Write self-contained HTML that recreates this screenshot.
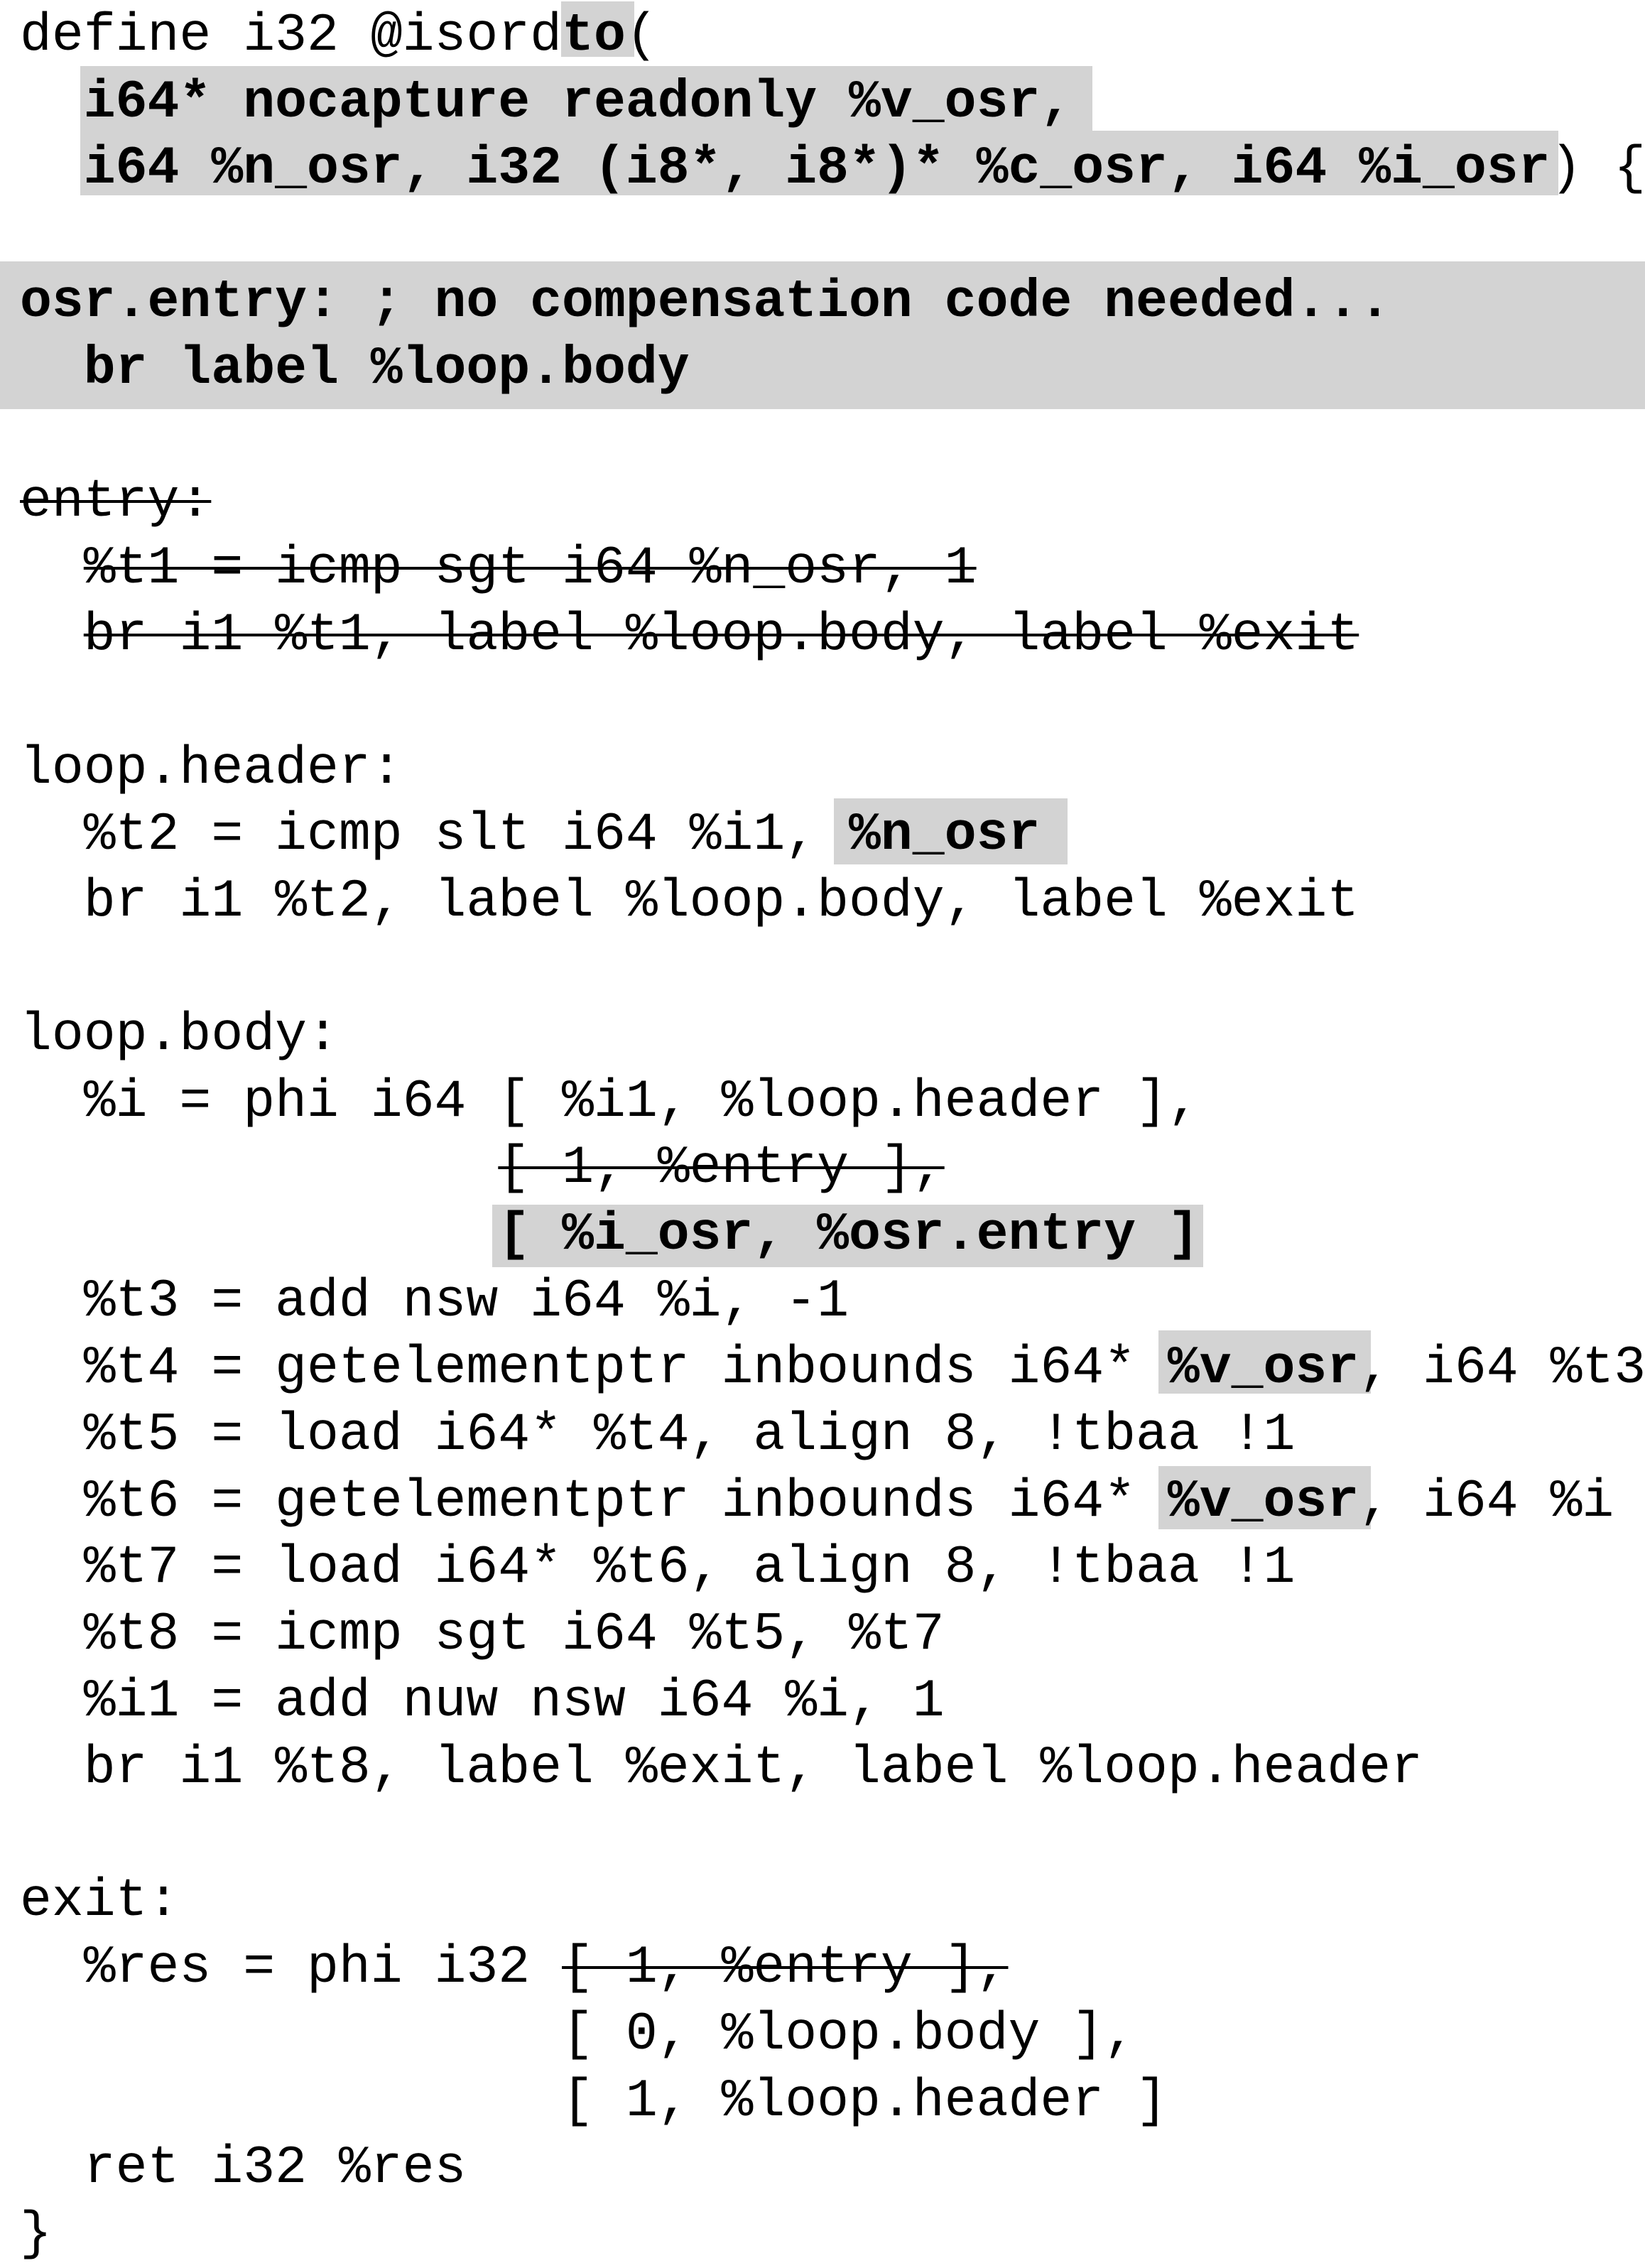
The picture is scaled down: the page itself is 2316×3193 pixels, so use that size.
<!DOCTYPE html>
<html><head><meta charset="utf-8"><style>
html,body{margin:0;padding:0;background:#fff;}
body{width:2316px;height:3183px;position:relative;overflow:hidden;}
.l{position:absolute;left:28px;height:94px;line-height:94px;font-family:"Liberation Mono",monospace;font-size:74.8px;white-space:pre;color:#000;margin:0;transform:translateY(6px);}
b{font-weight:bold;}
s{text-decoration:line-through;text-decoration-thickness:4px;}
.h{position:absolute;background:#d3d3d3;}
</style></head><body>
<div class="h" style="left:790px;top:2px;width:103px;height:78px"></div>
<div class="h" style="left:113px;top:93px;width:1425px;height:92px"></div>
<div class="h" style="left:113px;top:184px;width:2081px;height:91px"></div>
<div class="h" style="left:0;top:368px;width:2316px;height:208px"></div>
<div class="h" style="left:1174px;top:1124px;width:329px;height:93px"></div>
<div class="h" style="left:693px;top:1696px;width:1001px;height:88px"></div>
<div class="h" style="left:1631px;top:1873px;width:299px;height:89px"></div>
<div class="h" style="left:1631px;top:2064px;width:299px;height:89px"></div>

<div class="l" style="top:-2px">define i32 @isord<b>to</b>(</div>
<div class="l" style="top:92px"><b>  i64* nocapture readonly %v_osr,</b></div>
<div class="l" style="top:185px"><b>  i64 %n_osr, i32 (i8*, i8*)* %c_osr, i64 %i_osr</b>) {</div>
<div class="l" style="top:373px"><b>osr.entry: ; no compensation code needed...</b></div>
<div class="l" style="top:467px"><b>  br label %loop.body</b></div>
<div class="l" style="top:654px"><s>entry:</s></div>
<div class="l" style="top:748px">  <s>%t1 = icmp sgt i64 %n_osr, 1</s></div>
<div class="l" style="top:842px">  <s>br i1 %t1, label %loop.body, label %exit</s></div>
<div class="l" style="top:1030px">loop.header:</div>
<div class="l" style="top:1123px">  %t2 = icmp slt i64 %i1, <b>%n_osr</b></div>
<div class="l" style="top:1217px">  br i1 %t2, label %loop.body, label %exit</div>
<div class="l" style="top:1405px">loop.body:</div>
<div class="l" style="top:1499px">  %i = phi i64 [ %i1, %loop.header ],</div>
<div class="l" style="top:1592px">               <s>[ 1, %entry ],</s></div>
<div class="l" style="top:1686px">               <b>[ %i_osr, %osr.entry ]</b></div>
<div class="l" style="top:1780px">  %t3 = add nsw i64 %i, -1</div>
<div class="l" style="top:1874px">  %t4 = getelementptr inbounds i64* <b>%v_osr</b>, i64 %t3</div>
<div class="l" style="top:1968px">  %t5 = load i64* %t4, align 8, !tbaa !1</div>
<div class="l" style="top:2062px">  %t6 = getelementptr inbounds i64* <b>%v_osr</b>, i64 %i</div>
<div class="l" style="top:2155px">  %t7 = load i64* %t6, align 8, !tbaa !1</div>
<div class="l" style="top:2249px">  %t8 = icmp sgt i64 %t5, %t7</div>
<div class="l" style="top:2343px">  %i1 = add nuw nsw i64 %i, 1</div>
<div class="l" style="top:2437px">  br i1 %t8, label %exit, label %loop.header</div>
<div class="l" style="top:2624px">exit:</div>
<div class="l" style="top:2718px">  %res = phi i32 <s>[ 1, %entry ],</s></div>
<div class="l" style="top:2812px">                 [ 0, %loop.body ],</div>
<div class="l" style="top:2906px">                 [ 1, %loop.header ]</div>
<div class="l" style="top:3000px">  ret i32 %res</div>
<div class="l" style="top:3093px">}</div>
</body></html>
